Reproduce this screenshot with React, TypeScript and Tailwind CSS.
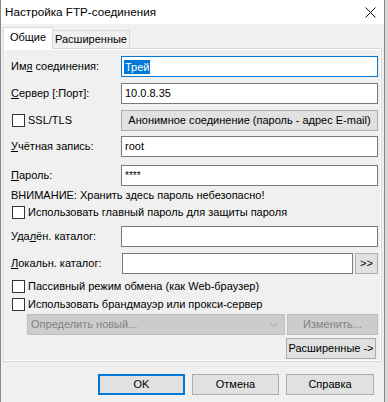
const Check = ({ label }: { label: React.ReactNode }) => (
    <div className="flex items-center h-[13px]">
        <div className="w-[13px] h-[13px] border border-[#333] bg-white shrink-0" />
        <span className="ml-[3px] leading-none">{label}</span>
    </div>
);

const Field = ({
    label,
    value,
    focused,
    mt,
}: {
    label: React.ReactNode;
    value?: React.ReactNode;
    focused?: boolean;
    mt: string;
}) => (
    <div className={`flex items-center h-[21px] ${mt}`}>
        <div className="w-[115px] pl-[5px] shrink-0">{label}</div>
        <div
            className={`flex-1 h-[21px] bg-white border flex items-center px-[3px] ${
                focused ? "border-[#0078d7]" : "border-[#7a7a7a]"
            }`}
        >
            {value}
        </div>
    </div>
);

const Btn = ({ children, className = "" }: { children: React.ReactNode; className?: string }) => (
    <div
        className={`h-[21px] bg-[#e1e1e1] border border-[#adadad] flex items-center justify-center whitespace-nowrap ${className}`}
    >
        {children}
    </div>
);

export default function App() {
    return (
        <div className="w-[388px] h-[402px] overflow-hidden flex text-[11px] text-black bg-[#f0f0f0] whitespace-nowrap font-['Liberation_Sans',Arial,sans-serif]">
            <div className="w-[385px] h-full flex flex-col border-l border-r border-[#8a8a8a]">
                {/* title bar */}
                <div className="h-[24px] bg-white flex items-center justify-between pl-[4px] pr-[8px] shrink-0">
                    <span className="text-[11.7px]">Настройка FTP-соединения</span>
                    <svg width="11" height="11" viewBox="0 0 11 11">
                        <path d="M0.5 0.5 L10.5 10.5 M10.5 0.5 L0.5 10.5" stroke="#111" strokeWidth="1" />
                    </svg>
                </div>

                {/* tabs */}
                <div className="flex items-end h-[24px] pl-[2px] shrink-0">
                    <div className="h-[22px] w-[50px] bg-white border border-b-0 border-[#d9d9d9] flex items-center justify-center relative z-10 -mb-px pb-[2px]">
                        Общие
                    </div>
                    <div className="h-[18px] w-[77px] bg-[#f0f0f0] border border-l-0 border-b-0 border-[#d9d9d9] flex items-center justify-center">
                        Расширенные
                    </div>
                </div>

                {/* panel */}
                <div className="mx-[2px] h-[314px] border border-[#d9d9d9] shrink-0">
                    <div className="h-full border border-white flex flex-col pr-[2px] pl-[1px]">
                        <Field
                            mt="mt-[6px]"
                            focused
                            label={<>Им<u>я</u> соединения:</>}
                            value={<span className="bg-[#0078d7] text-white leading-[14px] px-[1px] -ml-[1px]">Трей</span>}
                        />
                        <Field mt="mt-[6px]" label={<><u>С</u>ервер [:Порт]:</>} value="10.0.8.35" />
                        <div className="flex items-center h-[21px] mt-[6px]">
                            <div className="w-[115px] pl-[6px] shrink-0">
                                <Check label="SSL/TLS" />
                            </div>
                            <Btn className="flex-1">Анонимное соединение (пароль - адрес E-mail)</Btn>
                        </div>
                        <Field mt="mt-[5px]" label={<><u>У</u>чётная запись:</>} value="root" />
                        <Field mt="mt-[8px]" label={<><u>П</u>ароль:</>} value={<span className="text-[10px] leading-none">****</span>} />
                        <div className="pl-[5px] h-[16px] mt-[1px] flex items-center">
                            ВНИМАНИЕ: Хранить здесь пароль небезопасно!
                        </div>
                        <div className="pl-[6px] mt-[3px]">
                            <Check label="Использовать главный пароль для защиты пароля" />
                        </div>
                        <Field mt="mt-[7px]" label={<>Уда<u>л</u>ён. каталог:</>} />
                        <div className="flex items-center h-[21px] mt-[6px]">
                            <div className="w-[116px] pl-[5px] shrink-0">
                                <u>Л</u>окальн. каталог:
                            </div>
                            <div className="flex-1 h-[21px] bg-white border border-[#7a7a7a]" />
                            <Btn className="w-[23px] ml-[2px]">&gt;&gt;</Btn>
                        </div>
                        <div className="pl-[6px] mt-[6px]">
                            <Check label="Пассивный режим обмена (как Web-браузер)" />
                        </div>
                        <div className="pl-[6px] mt-[5px]">
                            <Check label="Использовать брандмауэр или прокси-сервер" />
                        </div>
                        <div className="flex items-center h-[21px] mt-[3px] pl-[21px]">
                            <div className="flex-1 h-[21px] bg-[#cccccc] border border-[#bfbfbf] flex items-center justify-between pl-[3px] pr-[6px] text-[#838383]">
                                <span>Определить новый...</span>
                                <svg width="9" height="5" viewBox="0 0 9 5">
                                    <path d="M0.5 0.5 L4.5 4.5 L8.5 0.5" fill="none" stroke="#a8a8a8" />
                                </svg>
                            </div>
                            <div className="w-[91px] ml-[2px] h-[21px] bg-[#cccccc] border border-[#bfbfbf] flex items-center justify-center text-[#838383]">
                                Изменить...
                            </div>
                        </div>
                        <div className="flex justify-end mt-[3px] pr-[2px]">
                            <Btn className="w-[90px]">Расширенные -&gt;</Btn>
                        </div>
                    </div>
                </div>

                {/* bottom buttons */}
                <div className="flex justify-end gap-[7px] pr-[10px] mt-[12px]">
                    <div className="w-[87px] h-[21px] bg-[#e1e1e1] border-2 border-[#0078d7] flex items-center justify-center">
                        OK
                    </div>
                    <Btn className="w-[87px]">Отмена</Btn>
                    <Btn className="w-[88px]">Справка</Btn>
                </div>
            </div>
            <div className="flex-1 bg-[#d8d8d8]" />
        </div>
    );
}
